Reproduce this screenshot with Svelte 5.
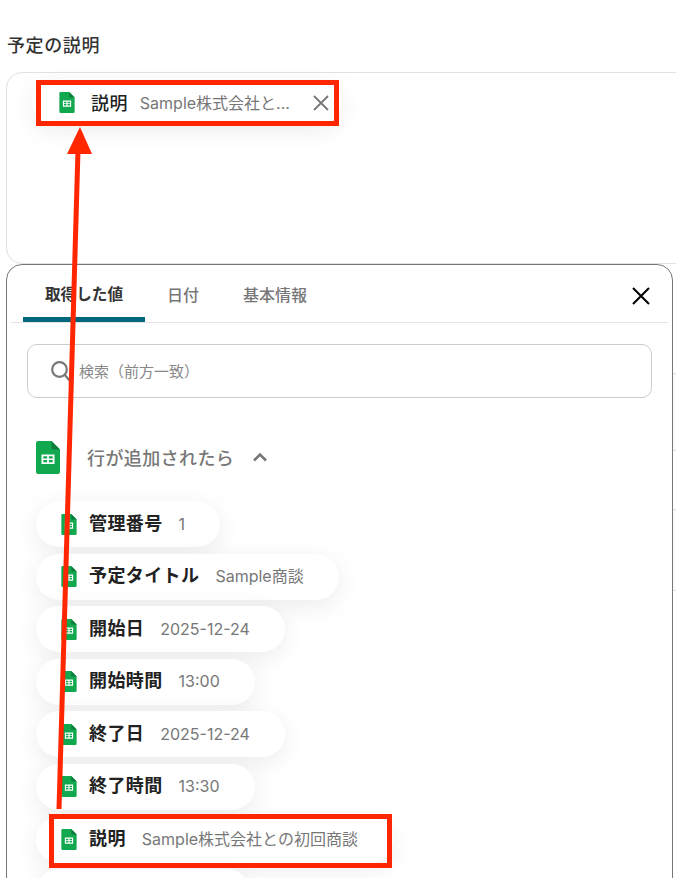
<script>
  const fields = [
    { label: '管理番号', value: '1' },
    { label: '予定タイトル', value: 'Sample商談' },
    { label: '開始日', value: '2025-12-24' },
    { label: '開始時間', value: '13:00' },
    { label: '終了日', value: '2025-12-24' },
    { label: '終了時間', value: '13:30' },
    { label: '説明', value: 'Sample株式会社との初回商談' },
    // cut off by the bottom of the page, only its top edge shows
    { label: '', value: '', width: 214 }
  ];
  const tabs = ['取得した値', '日付', '基本情報'];
</script>

{#snippet sheet(cls)}
  <svg class={cls} viewBox="0 0 24 33" aria-hidden="true">
    <path d="M2 0H15.5L24 8.5V31a2 2 0 0 1-2 2H2a2 2 0 0 1-2-2V2a2 2 0 0 1 2-2z" fill="#12a84f" />
    <path d="M15.5 0L24 8.5H17a1.500 1.500 0 0 1-1.500-1.500z" fill="#0c7d3c" />
    <path d="M5.500 13.500h13v9.500h-13z M7.300 15.200v2.300h3.800v-2.300z M12.900 15.200v2.300h3.800v-2.300z M7.300 19v2.300h3.800v-2.300z M12.900 19v2.300h3.800v-2.300z" fill="#fff" fill-rule="evenodd" />
  </svg>
{/snippet}

<div class="page">
  <h2 class="title">予定の説明</h2>

  <div class="field">
    <div class="chip">
      {@render sheet('icon-chip')}
      <span class="chip-label">説明</span>
      <span class="chip-value">Sample株式会社と...</span>
      <svg class="chip-close" viewBox="0 0 18 18" aria-hidden="true">
        <path d="M2 2L16 16M16 2L2 16" stroke="#777" stroke-width="1.800" fill="none" />
      </svg>
    </div>
  </div>

  <div class="behind first"></div>
  <div class="behind second"></div>

  <div class="panel">
    <div class="tabs">
      {#each tabs as tab, i}
        <div class="tab" class:active={i === 0}>{tab}</div>
      {/each}
      <svg class="panel-close" viewBox="0 0 20 20" aria-hidden="true">
        <path d="M2 2L18 18M18 2L2 18" stroke="#000" stroke-width="2" fill="none" />
      </svg>
    </div>

    <div class="search">
      <svg class="search-icon" viewBox="0 0 20 21" aria-hidden="true">
        <circle cx="8.500" cy="8.500" r="7.300" stroke="#777" stroke-width="2.200" fill="none" />
        <path d="M13.800 14L19 20" stroke="#777" stroke-width="2.200" fill="none" />
      </svg>
      <span class="search-text">検索（前方一致）</span>
    </div>

    <div class="group">
      {@render sheet('icon-group')}
      <span class="group-name">行が追加されたら</span>
      <svg class="chevron" viewBox="0 0 16 10" aria-hidden="true">
        <path d="M2 8.500L8 2.500L14 8.500" stroke="#777" stroke-width="2.600" fill="none" />
      </svg>
    </div>

    <div class="list">
      {#each fields as f}
        <div class="pill" style:width={f.width ? f.width + 'px' : null}>
          {#if f.label}
            {@render sheet('icon-pill')}
            <span class="pill-label">{f.label}</span>
            <span class="pill-value">{f.value}</span>
          {/if}
        </div>
      {/each}
    </div>
  </div>

  <svg class="marks" width="676" height="878" aria-hidden="true">
    <rect x="38.500" y="82.500" width="298" height="41" fill="none" stroke="#ff2600" stroke-width="5" />
    <rect x="51.500" y="816.500" width="338" height="49" fill="none" stroke="#ff2600" stroke-width="5" />
    <path d="M59 809L78 150" stroke="#ff2600" stroke-width="5" fill="none" />
    <path d="M80 127L92 154H67z" fill="#ff2600" />
  </svg>
</div>

<style>
  :global(body) {
    margin: 0;
    background: #fff;
  }
  .page {
    position: relative;
    width: 676px;
    height: 878px;
    overflow: hidden;
    font-family: Inter, "Noto Sans CJK JP", sans-serif;
    color: #222;
    box-sizing: border-box;
    padding-top: 35px;
  }
  .title {
    margin: 0 0 15px 7px;
    font-size: 18px;
    letter-spacing: 0.6px;
    line-height: 22px;
    font-weight: 500;
    color: #333;
  }
  .field {
    margin-left: 6px;
    width: 700px;
    height: 192px;
    box-sizing: border-box;
    border: 1px solid #dfe1e8;
    border-radius: 16px;
    padding: 7px 0 0 25px;
  }
  .chip {
    display: flex;
    align-items: center;
    width: 310px;
    height: 44px;
    box-sizing: border-box;
    padding-left: 27px;
    border-radius: 22px;
    background: #fff;
    box-shadow: 0 6px 24px rgba(0, 0, 0, 0.08);
  }
  .icon-chip {
    width: 16px;
    height: 21px;
    margin-right: 16px;
    flex: none;
  }
  .chip-label {
    font-size: 18px;
    letter-spacing: 0.4px;
    font-weight: 500;
    margin-right: 12px;
    flex: none;
  }
  .chip-value {
    font-size: 16px;
    color: #777;
    white-space: nowrap;
    width: 172px;
    flex: none;
  }
  .chip-close {
    width: 18px;
    height: 18px;
    margin-top: 2px;
    flex: none;
  }
  .behind {
    position: absolute;
    left: 640px;
    width: 60px;
    box-sizing: border-box;
    background: #fbfbfb;
    border: 1px solid #ddd;
  }
  .behind.first {
    top: 373px;
    height: 78px;
  }
  .behind.second {
    top: 509px;
    height: 82px;
  }
  .panel {
    position: relative;
    margin-left: 6px;
    width: 667px;
    height: 700px;
    box-sizing: border-box;
    border: 1px solid #777;
    border-radius: 16px;
    background: #fff;
    padding: 0 4px;
  }
  .tabs {
    position: relative;
    display: flex;
    height: 58px;
    box-sizing: border-box;
    padding-left: 12px;
    border-bottom: 1px solid #e4e4e4;
  }
  .tab {
    padding: 0 22px;
    font-size: 16px;
    font-weight: 500;
    line-height: 60px;
    color: #777;
    white-space: nowrap;
  }
  .tab.active {
    font-weight: 700;
    font-size: 15.600px;
    color: #333;
    border-bottom: 5px solid #00677c;
    border-radius: 5px 5px 0 0;
    height: 52px;
    width: 78px;
  }
  .panel-close {
    position: absolute;
    right: 17px;
    top: 21px;
    width: 20px;
    height: 20px;
  }
  .search {
    display: flex;
    align-items: center;
    margin: 21px 16px 0 16px;
    height: 54px;
    box-sizing: border-box;
    border: 1px solid #ccc;
    border-radius: 10px;
    padding-left: 23px;
    font-size: 15px;
    color: #888;
  }
  .search-text {
    margin-bottom: 2px;
  }
  .search-icon {
    width: 20px;
    height: 21px;
    margin-right: 8px;
    flex: none;
  }
  .group {
    display: flex;
    align-items: center;
    margin: 42px 0 0 25px;
    height: 34px;
  }
  .icon-group {
    width: 24px;
    height: 33px;
    flex: none;
    margin-right: 27px;
  }
  .group-name {
    font-size: 18px;
    letter-spacing: 0.4px;
    font-weight: 500;
    color: #777;
  }
  .chevron {
    width: 16px;
    height: 10px;
    margin-left: 18px;
    flex: none;
  }
  .list {
    display: flex;
    flex-direction: column;
    align-items: flex-start;
    gap: 6.600px;
    margin: 27px 0 0 25px;
  }
  .pill {
    display: flex;
    align-items: center;
    height: 46px;
    box-sizing: border-box;
    padding: 0 35px 0 25px;
    border-radius: 23px;
    background: #fff;
    box-shadow: 0 6px 24px rgba(0, 0, 0, 0.08);
    flex: none;
  }
  .icon-pill {
    width: 16px;
    height: 21px;
    margin-right: 12px;
    flex: none;
  }
  .pill-label {
    font-size: 18px;
    letter-spacing: 0.4px;
    line-height: 24px;
    margin-bottom: 1px;
    font-weight: 700;
    margin-right: 16px;
    white-space: nowrap;
  }
  .pill-value {
    font-size: 16px;
    line-height: 24px;
    margin-bottom: 1px;
    color: #777;
    white-space: nowrap;
  }
  .marks {
    position: absolute;
    left: 0;
    top: 0;
    pointer-events: none;
  }
</style>
